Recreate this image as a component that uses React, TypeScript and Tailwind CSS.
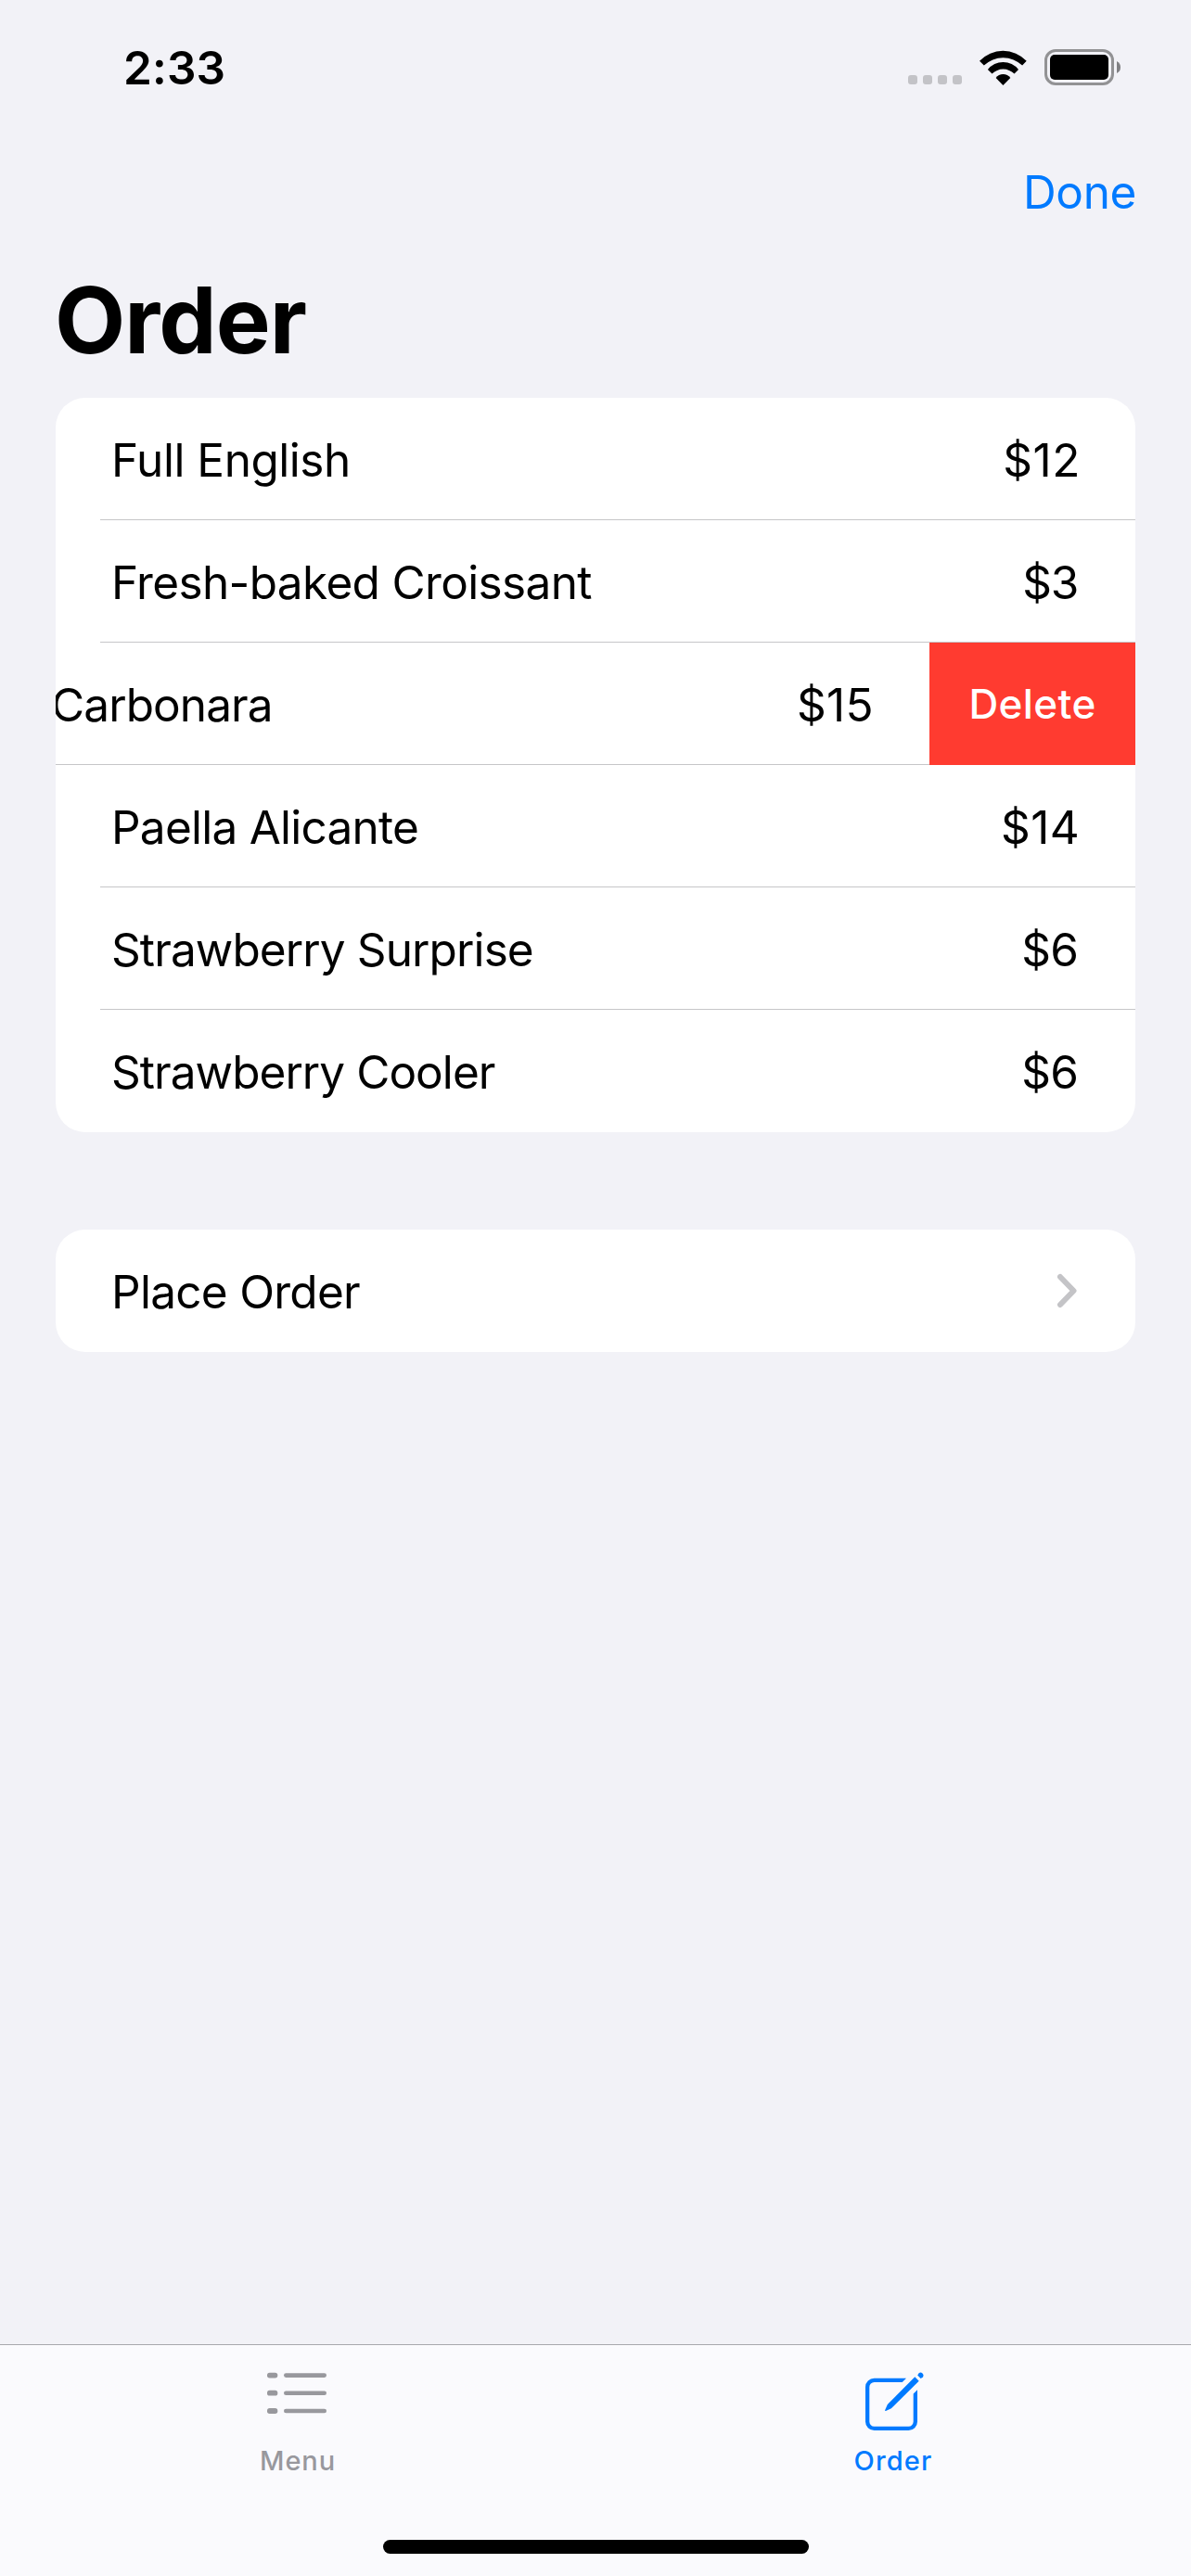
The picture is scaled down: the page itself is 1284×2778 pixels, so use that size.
import type { ReactNode } from "react";

type Item = { name: string; price: string; nameClass: string; priceClass: string; swiped?: boolean };

const items: Item[] = [
  { name: "Full English", price: "$12", nameClass: "tracking-[-0.47px]", priceClass: "tracking-[0.55px] mr-[59px]" },
  { name: "Fresh-baked Croissant", price: "$3", nameClass: "tracking-[-0.65px]", priceClass: "tracking-[-1.3px] mr-[62px]" },
  { name: "Carbonara", price: "$15", nameClass: "tracking-[-0.91px]", priceClass: "tracking-[0.35px] mr-[60px]", swiped: true },
  { name: "Paella Alicante", price: "$14", nameClass: "tracking-[-0.76px]", priceClass: "tracking-[0.35px] mr-[60px]" },
  { name: "Strawberry Surprise", price: "$6", nameClass: "tracking-[-0.89px]", priceClass: "tracking-[-0.9px] mr-[62px]" },
  { name: "Strawberry Cooler", price: "$6", nameClass: "tracking-[-0.95px]", priceClass: "tracking-[-0.9px] mr-[62px]" },
];

function StatusBar() {
  return (
    <div className="flex h-[146px] items-center justify-between pl-[133px] pr-[76px]">
      <span className="text-[49.5px] leading-[60px] font-semibold tracking-[0.15px]">2:33</span>
      <div className="flex items-center">
        <div className="mt-[26px] mr-[19px] flex gap-1.5">
          {[0, 1, 2, 3].map((dot) => (
            <span key={dot} className="size-2.5 rounded-[3px] bg-[#c3c3c7]" />
          ))}
        </div>
        <svg className="mr-[18px] h-[39px] w-[52px]" viewBox="0 0 52 39">
          <path d="M0 11.8A34.7 34.7 0 0 1 50.7 11.8L46.1 16.6A29.6 29.6 0 0 0 4.8 16.6Z" />
          <path d="M8.9 21A21 21 0 0 1 42 21L37.5 25.6A16.9 16.9 0 0 0 13.5 25.6Z" />
          <path d="M17.6 30A9.6 9.6 0 0 1 33.3 30L25.4 38Z" />
        </svg>
        <svg className="mb-px h-[39px] w-[82px]" viewBox="0 0 82 39">
          <rect x="1.5" y="1.5" width="72" height="36" rx="10.5" fill="none" stroke="#929294" strokeWidth="3" />
          <rect x="6" y="6" width="63" height="27" rx="5" />
          <path d="M78 13Q82 15 82 19.5Q82 24 78 26Z" fill="#808083" />
        </svg>
      </div>
    </div>
  );
}

function OrderRow({ item, last }: { item: Item; last: boolean }) {
  if (item.swiped) {
    return (
      <li className="flex h-[132px]">
        <div className="flex min-w-0 flex-1 items-center justify-between overflow-hidden border-b border-[#c6c6c8] pt-[3px]">
          <span className={`-ml-[5px] ${item.nameClass}`}>{item.name}</span>
          <span className={item.priceClass}>{item.price}</span>
        </div>
        <button className="flex w-[222px] items-center justify-center bg-[#ff3b30] text-[44px] font-medium tracking-[0.385px] text-white">
          Delete
        </button>
      </li>
    );
  }
  return (
    <li className="h-[132px] pl-12">
      <div className={`flex h-full items-center justify-between border-b pl-3 pt-[3px] ${last ? "border-transparent" : "border-[#c6c6c8]"}`}>
        <span className={item.nameClass}>{item.name}</span>
        <span className={item.priceClass}>{item.price}</span>
      </div>
    </li>
  );
}

function Tab({ icon, children }: { icon: ReactNode; children: ReactNode }) {
  return (
    <div className="flex flex-col items-center text-[29px] leading-9 font-medium">
      <div className="flex h-[107px] items-start justify-center">{icon}</div>
      {children}
    </div>
  );
}

export default function App() {
  return (
    <div className="flex h-[2778px] w-[1284px] flex-col bg-[#f2f2f7] font-['Inter',sans-serif] text-black">
      <StatusBar />
      <div className="flex h-[122px] items-center justify-end pr-[59px] text-[49.5px] leading-[60px] tracking-[-0.37px] text-[#007aff]">
        Done
      </div>
      <h1 className="mb-2 flex h-[153px] items-center pl-[59px] text-[99px] leading-[120px] font-bold tracking-[-0.965px]">Order</h1>

      <main className="flex flex-1 flex-col gap-[105px] px-[60px] text-[49.5px] leading-[60px]">
        <ul className="overflow-hidden rounded-[32px] bg-white">
          {items.map((item, i) => (
            <OrderRow key={item.name} item={item} last={i === items.length - 1} />
          ))}
        </ul>
        <div className="flex h-[132px] items-center justify-between rounded-[32px] bg-white pt-0.5 pr-[63px] pl-[60px]">
          <span className="tracking-[-0.72px]">Place Order</span>
          <svg className="-mt-0.5 h-[38px] w-6" viewBox="0 0 24 38">
            <path d="M6 4L20.5 19L6 34" fill="none" stroke="#c4c4c7" strokeWidth="6" strokeLinecap="round" strokeLinejoin="round" />
          </svg>
        </div>
      </main>

      <footer className="flex h-[250px] flex-col items-center border-t border-[#a8a8ac] bg-[#fafafd]">
        <nav className="grid h-[210px] w-full grid-cols-2">
          <div className="text-[#98989d]">
            <Tab
              icon={
                <svg className="mt-[29px] mr-0.5 h-[46px] w-16" viewBox="0 0 64 46" fill="currentColor">
                  {[3.6, 22.7, 42].map((y) => (
                    <g key={y}>
                      <rect x="0" y={y - 2.9} width="11.3" height="5.8" rx="2.7" />
                      <rect x="18" y={y - 2.3} width="46" height="4.6" rx="2.3" />
                    </g>
                  ))}
                </svg>
              }
            >
              <span className="tracking-[0.885px]">Menu</span>
            </Tab>
          </div>
          <div className="text-[#007aff]">
            <Tab
              icon={
                <svg className="mt-[27px] ml-1 h-[66px] w-16" viewBox="0 0 64 66" fill="currentColor">
                  <path d="M44 8.7H9.5A9.5 9.5 0 0 0 0 18.2V55.5A9.5 9.5 0 0 0 9.5 65H46.5A9.5 9.5 0 0 0 56 55.5V21.3L51.7 25.6V55.5A5.2 5.2 0 0 1 46.5 60.7H9.5A5.2 5.2 0 0 1 4.3 55.5V18.2A5.2 5.2 0 0 1 9.5 13H39.7Z" />
                  <path d="M53.3 7.3L57.7 11.7L27.9 41.2L22 43.9Q20.8 44.2 21.2 43L23.8 37Z" />
                  <path d="M56.2 5.5L57.6 3.2A3.2 3.2 0 0 1 62.1 7.5L59.6 8.9Z" />
                </svg>
              }
            >
              <span className="tracking-[1.136px]">Order</span>
            </Tab>
          </div>
        </nav>
        <div className="h-[15px] w-[459px] rounded-full bg-black" />
      </footer>
    </div>
  );
}
